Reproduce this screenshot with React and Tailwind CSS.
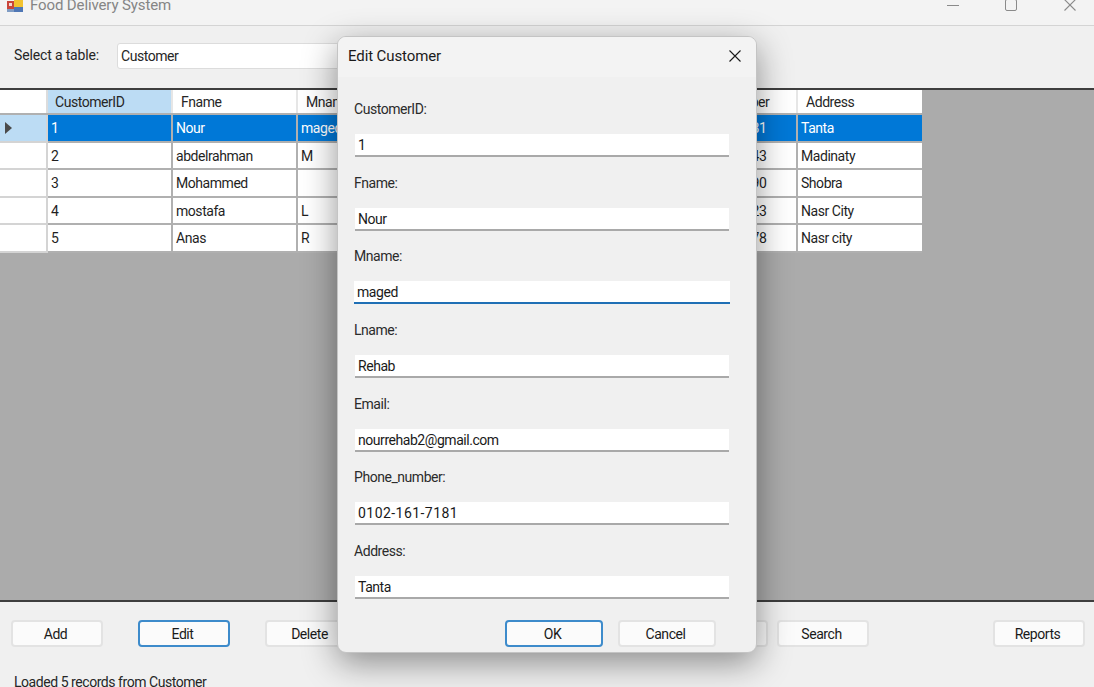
import React from "react";

const FONT = "font-['Roboto','Noto_Sans',sans-serif] tracking-[-0.45px]";

const columns = ["CustomerID", "Fname", "Mname", "Lname", "Email", "Phone_number", "Address"];

const rows = [
  ["1", "Nour", "maged", "Rehab", "nourrehab2@gmail.com", "0102-161-7181", "Tanta"],
  ["2", "abdelrahman", "M", "", "", "0100-000-0043", "Madinaty"],
  ["3", "Mohammed", "", "", "", "0100-000-0090", "Shobra"],
  ["4", "mostafa", "L", "", "", "0100-000-0023", "Nasr City"],
  ["5", "Anas", "R", "", "", "0100-000-0078", "Nasr city"],
];

const fields = [
  ["CustomerID:", "1"],
  ["Fname:", "Nour"],
  ["Mname:", "maged"],
  ["Lname:", "Rehab"],
  ["Email:", "nourrehab2@gmail.com"],
  ["Phone_number:", "0102-161-7181"],
  ["Address:", "Tanta"],
];

const AppIcon = () => (
  <svg width="17" height="13" viewBox="0 0 17 13" className="shrink-0">
    <rect x="0" y="2" width="7" height="8" fill="#c9453a" />
    <rect x="2" y="4" width="3" height="3" fill="#f3d9d4" />
    <rect x="7" y="0" width="9" height="8" fill="#f2c230" />
    <rect x="0" y="10" width="7" height="3" fill="#7f9cc4" />
    <rect x="7" y="8" width="9" height="5" fill="#4f77b5" />
  </svg>
);

const CloseIcon = ({ color = "#1a1a1a", size = 12 }) => (
  <svg width={size} height={size} viewBox="0 0 12 12" fill="none" stroke={color} strokeWidth="1.1">
    <path d="M0.5 0.5 L11.5 11.5 M11.5 0.5 L0.5 11.5" />
  </svg>
);

const WinButton = ({ children, focused, className = "" }) => (
  <button
    className={`h-[27px] pt-[2px] pr-[3px] bg-[#fbfbfb] rounded-[4px] text-[14px] text-[#1a1a1a] flex items-center justify-center border-2 ${
      focused ? "border-[#3d8bcb]" : "border-[#e3e3e3]"
    } ${className}`}
  >
    {children}
  </button>
);

const Cell = ({ children, selected, last, phone }) => (
  <div
    className={`shrink-0 h-full pt-[2px] flex items-center whitespace-nowrap overflow-hidden text-[14px] border-b-2 border-[#b0b0b0] ${
      last ? "w-[124px]" : "w-[125px] border-r-2"
    } ${phone ? "pl-[5px]" : "pl-[3px]"} ${selected ? "bg-[#0078d7] text-white" : "bg-white text-[#1f1f1f]"}`}
  >
    {children}
  </div>
);

const Field = ({ label, value, focused }) => (
  <div className="h-[73.67px] shrink-0 flex flex-col">
    <div className="h-[24px] pl-[16px] pt-[1px] flex items-center text-[14px] text-[#2b2b2b]">{label}</div>
    <div
      className={`mt-[13px] h-[23px] bg-white flex items-center pl-[3px] pt-[2px] text-[14px] text-[#1a1a1a] border-b-2 ${
        focused ? "ml-[16px] mr-[26px] border-[#1f6fb5]" : "ml-[17px] mr-[27px] border-[#a9a9a9]"
      } ${label === "Phone_number:" ? "tracking-[0.45px]" : ""}`}
    >
      {value}
    </div>
  </div>
);

const EditDialog = () => (
  <div className="absolute left-[337px] top-[36px] w-[420px] h-[617px] rounded-[9px] bg-[#f0f0f0] border border-[#c4c4c4] shadow-[0_10px_34px_rgba(0,0,0,0.42)] flex flex-col overflow-hidden">
    <div className="h-[40px] pb-[2px] shrink-0 bg-[#f3f3f3] pl-[10px] pr-[15px] flex items-center justify-between">
      <span className="text-[15px] tracking-[-0.1px] text-[#1a1a1a]">Edit Customer</span>
      <CloseIcon />
    </div>
    <div className="pt-[20px] flex flex-col">
      {fields.map(([label, value]) => (
        <Field key={label} label={label} value={value} focused={label === "Mname:"} />
      ))}
    </div>
    <div className="flex justify-end gap-[15px] pr-[40px] mt-[7px]">
      <WinButton focused className="w-[98px]">OK</WinButton>
      <WinButton className="w-[98px]">Cancel</WinButton>
    </div>
  </div>
);

export default function App() {
  return (
    <div className={`relative w-[1094px] h-[687px] overflow-hidden bg-[#f0f0f0] flex flex-col ${FONT}`}>
      {/* Title bar */}
      <div className="h-[26px] shrink-0 bg-[#f3f3f3] border-b border-[#d4d4d4] flex items-start">
        <div className="ml-[7px] -mt-[1px]">
          <AppIcon />
        </div>
        <span className="ml-[6px] -mt-[6px] text-[15px] tracking-[-0.12px] text-[#858585] whitespace-nowrap">
          Food Delivery System
        </span>
        <div className="ml-auto flex items-start">
          <div className="w-[12px] h-px bg-[#8a8a8a] mt-[5px]" />
          <div className="ml-[46px] -mt-[1px] w-[12px] h-[12px] border border-[#8a8a8a] rounded-[2px]" />
          <div className="ml-[47px] mr-[18px] -mt-[1px]">
            <CloseIcon color="#8a8a8a" />
          </div>
        </div>
      </div>

      {/* Table picker */}
      <div className="h-[62px] shrink-0 flex items-start pl-[14px] pt-[17px]">
        <span className="w-[103px] text-[14px] leading-[24px] tracking-[-0.15px] text-[#262626]">Select a table:</span>
        <div className="w-[300px] h-[26px] pt-[1px] bg-white border border-[#dcdcdc] rounded-[3px] pl-[3px] flex items-center text-[14px] text-[#262626]">
          Customer
        </div>
      </div>

      {/* Grid */}
      <div className="flex-1 bg-[#ababab] border-y-2 border-[#3e3e3e] min-h-0 overflow-hidden">
        <div className="flex h-[25px] w-[921px] bg-white border-b-2 border-[#b0b0b0]">
          <div className="w-[48px] shrink-0 border-r-2 border-[#dcdcdc]" />
          {columns.map((col, i) => (
            <div
              key={col}
              className={`shrink-0 pt-[2px] flex items-center whitespace-nowrap text-[14px] text-[#262626] ${
                i === 6 ? "w-[124px]" : "w-[125px] border-r-2 border-[#e6e6e6]"
              } ${i === 0 ? "pl-[7px] bg-[#bcdcf4]" : "pl-[8px] bg-white"}`}
            >
              {col}
            </div>
          ))}
        </div>
        {rows.map((row, r) => (
          <div key={row[0]} className="flex h-[27.5px] w-[921px]">
            <div
              className={`w-[48px] shrink-0 border-r-2 border-b-2 border-[#d4d4d4] flex items-center pl-[5px] ${
                r === 0 ? "bg-[#bcdcf4]" : "bg-white"
              }`}
            >
              {r === 0 && (
                <svg width="7" height="12" viewBox="0 0 7 12">
                  <path d="M0 0 L7 6 L0 12 Z" fill="#4a4a4a" />
                </svg>
              )}
            </div>
            {row.map((value, c) => (
              <Cell key={c} selected={r === 0} last={c === row.length - 1} phone={c === 5}>
                {value}
              </Cell>
            ))}
          </div>
        ))}
      </div>

      {/* Actions and status */}
      <div className="h-[85px] shrink-0 pt-[18px] flex flex-col">
        <div className="flex pl-[11px]">
          <WinButton className="w-[92px]">Add</WinButton>
          <WinButton focused className="w-[92px] ml-[35px]">Edit</WinButton>
          <WinButton className="w-[92px] ml-[35px]">Delete</WinButton>
          <WinButton className="w-[90px] ml-[321px]" />
          <WinButton className="w-[92px] ml-[9px]">Search</WinButton>
          <WinButton className="w-[92px] ml-[124px]">Reports</WinButton>
        </div>
        <div className="pl-[14px] mt-[25px] text-[14px] leading-[20px] text-[#262626] whitespace-nowrap">
          Loaded 5 records from Customer
        </div>
      </div>

      <EditDialog />
    </div>
  );
}
